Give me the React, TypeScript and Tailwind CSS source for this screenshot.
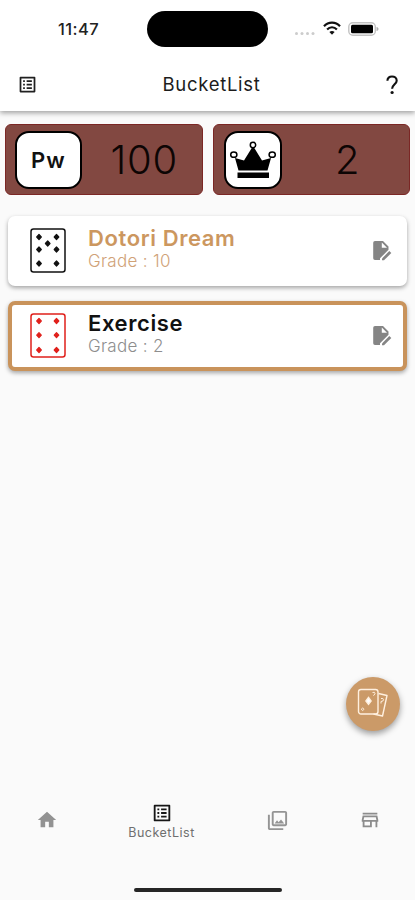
import type { ReactNode } from 'react'
import {
  MdHome,
  MdOutlineListAlt,
  MdOutlinePhotoLibrary,
  MdOutlineStore,
} from 'react-icons/md'

interface Bucket {
  id: number
  title: string
  grade: number
  pips: [number, number][]
  done: boolean
}

const buckets: Bucket[] = [
  {
    id: 1,
    title: 'Dotori Dream',
    grade: 10,
    pips: [[9, 9], [26.5, 9], [17.7, 15.5], [9, 21.5], [26.5, 21.5], [9, 35.5], [26.5, 35.5]],
    done: true,
  },
  {
    id: 2,
    title: 'Exercise',
    grade: 2,
    pips: [[9, 8], [26.5, 8], [9, 22.2], [26.5, 22.2], [9, 37], [26.5, 37]],
    done: false,
  },
]

function StatusBar() {
  return (
    <div className="relative flex h-[58px] items-center justify-between pr-[36px] pl-[58px]">
      <span className="text-[16.5px] font-medium tracking-[0.4px] text-[#222222]">11:47</span>
      <div className="absolute top-[11px] left-[147px] h-[36px] w-[121px] rounded-full bg-black" />
      <div className="flex items-center">
        <svg className="mt-[4px]" width="22" height="14" viewBox="0 0 22 14" fill="#cccccc">
          <circle cx="2.5" cy="9.5" r="1.5" />
          <circle cx="8" cy="9.5" r="1.5" />
          <circle cx="13.5" cy="9.5" r="1.5" />
          <circle cx="19" cy="9.5" r="1.5" />
        </svg>
        <svg className="mb-[2px] ml-[7px]" width="18" height="14" viewBox="0 0 18 14" fill="none" stroke="#111111" strokeWidth="2.2">
          <path d="M1 5.2C5.4.3 12.6.3 17 5.2" />
          <path d="M4.1 8.4c2.8-2.9 7-2.9 9.8 0" />
          <path d="M6.4 11c1.5-1.5 3.7-1.5 5.2 0L9 13.7z" fill="#111111" stroke="none" />
        </svg>
        <svg className="mb-[1px] ml-[7px]" width="31" height="14" viewBox="0 0 31 14">
          <rect x=".8" y=".8" width="26.5" height="12.4" rx="4" fill="#ffffff" stroke="#c2c2c2" strokeWidth="1.4" />
          <rect x="3" y="2.7" width="22" height="8.6" rx="1.5" fill="#000000" />
          <path d="M28.5 5v4c1.300-.4 2-1 2-2s-.7-1.600-2-2z" fill="#b0b0b0" />
        </svg>
      </div>
    </div>
  )
}

function HelpIcon() {
  return (
    <svg width="12" height="20" viewBox="0 0 12 20" fill="none" stroke="#111111" strokeWidth="2.1">
      <path d="M1.400 5.800C1.400 3 3.300 1.500 6 1.500s4.700 1.700 4.700 4.200c0 3.300-4.600 4-4.600 8" />
      <circle cx="6.100" cy="17.500" r="1.600" fill="#111111" stroke="none" />
    </svg>
  )
}

function Header() {
  return (
    <header className="relative z-10 h-[111px] bg-white shadow-[0_2px_5px_rgba(0,0,0,0.36)]">
      <StatusBar />
      <div className="flex h-[53px] items-center justify-between pr-[17px] pl-[17px]">
        <MdOutlineListAlt className="size-[21px] text-[#202020]" />
        <h1 className="ml-[-1px] text-[18.5px] tracking-[0.7px] text-[#1c1c1c]">BucketList</h1>
        <HelpIcon />
      </div>
    </header>
  )
}

function Crown() {
  return (
    <svg width="50" height="40" viewBox="0 0 50 40">
      <path d="M7 18l9 2.5 9-14.5 9 14.500 9-2.500-3.500 12.500h-29z" fill="#000000" />
      <path d="M9.500 32.500h31.500v5.500H9.500z" fill="#000000" />
      <g fill="#ffffff" stroke="#000000" strokeWidth="1.5">
        <circle cx="25" cy="5" r="2.7" />
        <ellipse cx="5.8" cy="14.7" rx="3.1" ry="2.6" />
        <ellipse cx="44.2" cy="14.7" rx="3.1" ry="2.6" />
      </g>
    </svg>
  )
}

function ScoreBox({ badge, value }: { badge: ReactNode; value: number }) {
  return (
    <div className="flex h-[71px] flex-1 items-center rounded-[6px] border border-[#7b2725] bg-[#824841] pl-[9px]">
      {badge}
      <span className="flex-1 pt-[1px] pl-[5px] text-center text-[40px] leading-none font-light tracking-[0.8px] text-[#0d0504]">
        {value}
      </span>
    </div>
  )
}

function PlayingCard({ pips, color }: { pips: [number, number][]; color: string }) {
  return (
    <svg width="36" height="45" viewBox="0 0 36 45" fill={color}>
      <rect x="1" y="1" width="34" height="43" rx="2.5" fill="none" stroke={color} strokeWidth="1.5" />
      {pips.map(([x, y]) => (
        <path
          key={`${x}-${y}`}
          d={`M${x} ${y - 2.5}l2.300 2.500-2.300 2.500-2.300-2.500z`}
          stroke={color}
          strokeWidth="1.200"
          strokeLinejoin="round"
        />
      ))}
    </svg>
  )
}

// Document with a folded corner and a pencil over its lower right
function EditIcon() {
  return (
    <svg width="19" height="20" viewBox="0 0 19 20" fill="#858585">
      <path fillRule="evenodd" d="M2 0h8l5.500 5.500v3.300L7 17.300V19H2a1.800 1.800 0 0 1-1.800-1.800V1.800A1.800 1.800 0 0 1 2 0zm6.800 1.600v5.200h5.200z" />
      <path d="M9 19.300v-1.900l7.300-7.300 2 2-7.300 7.200z" />
    </svg>
  )
}

function BucketCard({ bucket }: { bucket: Bucket }) {
  const { title, grade, pips, done } = bucket
  return (
    <li
      className={`flex h-[70px] items-center rounded-[7px] border-4 bg-white pr-[11px] pb-[1px] pl-[18px] shadow-[0_2px_4px_rgba(0,0,0,0.34)] ${
        done ? 'border-white' : 'border-[#c9935b]'
      }`}
    >
      <PlayingCard pips={pips} color={done ? '#111111' : '#e0201b'} />
      <div className="ml-[22px] flex-1 pb-[3px]">
        <h2 className={`text-[22px] leading-[25px] font-semibold tracking-[0.6px] ${done ? 'text-[#cc975f]' : 'text-[#111111]'}`}>
          {title}
        </h2>
        <p className={`text-[17px] leading-[21px] font-light tracking-[0.3px] ${done ? 'text-[#d0a277]' : 'text-[#8e8e8e]'}`}>
          Grade : {grade}
        </p>
      </div>
      <EditIcon />
    </li>
  )
}

function AddButton() {
  return (
    <button className="absolute top-[677px] left-[346px] flex size-[54px] items-center justify-center rounded-full bg-[#cb9a68] shadow-[0_3px_6px_rgba(0,0,0,0.38)]">
      <svg className="-mt-[2px]" width="32" height="32" viewBox="0 0 32 32" fill="none" stroke="#fff0df" strokeWidth="1.4">
        <path d="M21.5 6.500l8.500 2-4.500 20.500-9-2" strokeLinejoin="round" />
        <rect x="1.500" y="2.500" width="19.500" height="24.500" rx="2.500" />
        <path d="M11.500 10.500l2.600 3.400-2.600 3.400-2.600-3.400z" fill="#ffffff" />
        <path d="M15.500 5.500q2.500-1 2.500 1.200l-1.500 2M4.500 22c1-2 3-.5 2 1-.6 1-2 .5-2-1zM24 11.500q2.500-.5 2.500 1.200T24 14.500v2" strokeWidth="1" />
      </svg>
    </button>
  )
}

function BottomNav() {
  return (
    <nav className="flex h-[109px] items-start pt-[19px] text-[#929292]">
      <div className="flex h-[20px] w-[93px] items-center justify-center">
        <MdHome className="size-[22px]" />
      </div>
      <div className="-mt-[8px] flex w-[137px] flex-col items-center">
        <MdOutlineListAlt className="size-[22px] text-[#161616]" />
        <span className="mt-[1px] text-[12.5px] leading-[15px] tracking-[0.5px] text-[#6f6f6f]">BucketList</span>
      </div>
      <div className="flex h-[20px] w-[94px] items-center justify-center">
        <MdOutlinePhotoLibrary className="size-[23px] text-[#949494]" />
      </div>
      <div className="flex h-[20px] w-[91px] items-center justify-center">
        <MdOutlineStore className="size-[22px] text-[#8c8c8c]" />
      </div>
    </nav>
  )
}

export default function App() {
  return (
    <div className="relative flex h-[900px] w-[415px] flex-col overflow-hidden bg-[#fafafa] font-['Inter',sans-serif]">
      <Header />
      <main className="flex-1">
        <section className="flex gap-[10px] px-[5px] pt-[13px]">
          <ScoreBox
            value={100}
            badge={
              <div className="flex h-[58px] w-[67px] items-center justify-center rounded-[14px] border-2 border-black bg-white pt-[1px] text-[22px] font-semibold tracking-[1.2px] text-[#111111]">
                Pw
              </div>
            }
          />
          <ScoreBox
            value={2}
            badge={
              <div className="ml-[1px] flex size-[58px] items-center justify-center rounded-[14px] border-2 border-black bg-white">
                <Crown />
              </div>
            }
          />
        </section>
        <ul className="mt-[21px] flex flex-col gap-[15px] px-[8px]">
          {buckets.map((bucket) => (
            <BucketCard key={bucket.id} bucket={bucket} />
          ))}
        </ul>
      </main>
      <BottomNav />
      <AddButton />
      <div className="absolute bottom-[8px] left-[134px] h-[4px] w-[148px] rounded-full bg-[#252525]" />
    </div>
  )
}
